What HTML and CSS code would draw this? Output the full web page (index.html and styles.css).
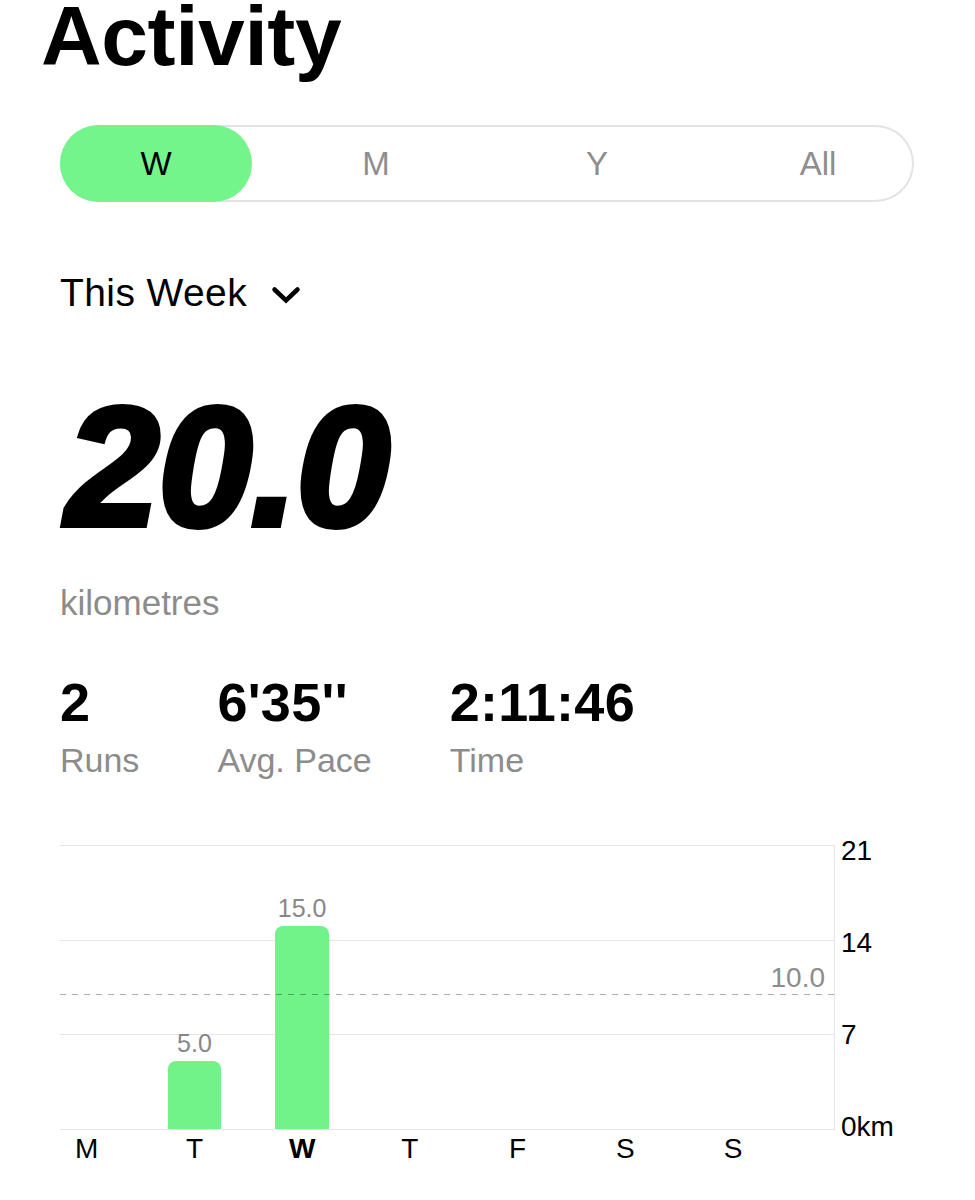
FILE: index.html
```html
<!DOCTYPE html>
<html lang="en">
<head>
<meta charset="utf-8">
<title>Activity</title>
<link rel="stylesheet" href="styles.css">
</head>
<body>
<main class="page">
  <h1 class="title">Activity</h1>

  <div class="seg">
    <div class="seg-pill">W</div>
    <div class="seg-rest">
      <span class="seg-item">M</span>
      <span class="seg-item">Y</span>
      <span class="seg-item">All</span>
    </div>
  </div>

  <div class="period">
    <span>This Week</span>
    <svg class="chev" width="30" height="20" viewBox="0 0 30 20" aria-hidden="true">
      <path d="M3.5 4.5 L15 15.5 L26.5 4.5" fill="none" stroke="#000" stroke-width="4.5" stroke-linecap="round" stroke-linejoin="miter"/>
    </svg>
  </div>

  <div class="big">20.0</div>
  <div class="unit">kilometres</div>

  <div class="stats">
    <div class="stat">
      <div class="stat-value">2</div>
      <div class="stat-label">Runs</div>
    </div>
    <div class="stat">
      <div class="stat-value">6'35''</div>
      <div class="stat-label">Avg. Pace</div>
    </div>
    <div class="stat">
      <div class="stat-value">2:11:46</div>
      <div class="stat-label">Time</div>
    </div>
  </div>

  <div class="chart">
    <div class="chart-main">
      <div class="plot">
        <div class="bars">
          <div class="col"><div class="slot"></div></div>
          <div class="col"><div class="slot"><span class="val">5.0</span><div class="bar" style="height:67.6px"></div></div></div>
          <div class="col"><div class="slot"><span class="val">15.0</span><div class="bar" style="height:202.9px"></div></div></div>
          <div class="col"><div class="slot"></div></div>
          <div class="col"><div class="slot"></div></div>
          <div class="col"><div class="slot"></div></div>
          <div class="col"><div class="slot"></div></div>
        </div>
        <div class="avg"><span class="avg-label">10.0</span></div>
      </div>
      <div class="days">
        <span class="day"><span>M</span></span>
        <span class="day"><span>T</span></span>
        <span class="day cur"><span>W</span></span>
        <span class="day"><span>T</span></span>
        <span class="day"><span>F</span></span>
        <span class="day"><span>S</span></span>
        <span class="day"><span>S</span></span>
      </div>
    </div>
    <div class="axis">
      <span>21</span>
      <span>14</span>
      <span>7</span>
      <span>0km</span>
    </div>
  </div>
</main>
</body>
</html>
```

FILE: styles.css
```css
* { box-sizing: content-box; }

html, body {
  margin: 0;
  padding: 0;
  background: #ffffff;
}

body {
  font-family: "Liberation Sans", Arial, Helvetica, sans-serif;
  color: #000;
}

.page {
  padding: 0 0 0 60px;
}

.title {
  margin: 0 0 0 -19px;
  font-size: 84px;
  line-height: 72px;
  font-weight: 700;
  letter-spacing: -0.4px;
}

/* segmented control */
.seg {
  margin-top: 53px;
  width: 854px;
  height: 77px;
  border-radius: 39px;
  box-shadow: inset 0 0 0 2px #e3e3e3;
  display: flex;
  align-items: center;
}

.seg-pill {
  flex: none;
  width: 192px;
  height: 77px;
  border-radius: 38.5px;
  background: #74f58b;
  display: flex;
  align-items: center;
  justify-content: center;
  font-size: 33px;
  line-height: 33px;
  color: #000;
}

.seg-rest {
  display: flex;
  margin-left: 13.5px;
}

.seg-item {
  flex: none;
  width: 221px;
  text-align: center;
  font-size: 33px;
  line-height: 33px;
  color: #8e8e8e;
}

/* period selector */
.period {
  margin-top: 71px;
  display: flex;
  align-items: flex-start;
  font-size: 39px;
  line-height: 39px;
  letter-spacing: 0.4px;
}

.chev {
  display: block;
  margin-left: 24px;
  margin-top: 12px;
}

/* big number */
.big {
  margin-top: 71px;
  margin-left: 6px;
  font-size: 168px;
  line-height: 168px;
  font-weight: 700;
  font-style: italic;
  -webkit-text-stroke: 6px #000;
  letter-spacing: -1px;
}

.unit {
  margin-top: 34.5px;
  font-size: 35px;
  line-height: 34px;
  color: #8c8c8c;
}

/* stats */
.stats {
  margin-top: 55.5px;
  display: flex;
  gap: 78px;
}

.stat-value {
  font-size: 54px;
  line-height: 54px;
  font-weight: 700;
  letter-spacing: 0.3px;
}

.stat-label {
  margin-top: 13.5px;
  font-size: 34px;
  line-height: 34px;
  color: #8c8c8c;
}

/* chart */
.chart {
  margin-top: 68.5px;
  display: flex;
  align-items: flex-start;
}

.plot {
  position: relative;
  width: 774px;
  height: 285px;
  border-right: 1px solid #e4e4e4;
  background-image: repeating-linear-gradient(to bottom, #e6e6e6 0, #e6e6e6 1px, transparent 1px, transparent 94.667px);
}

.bars {
  display: flex;
  align-items: flex-end;
  height: 284px;
}

.col {
  flex: none;
  width: 107.71px;
}

.slot {
  width: 53.5px;
  display: flex;
  flex-direction: column;
  align-items: center;
}

.val {
  font-size: 25px;
  line-height: 25px;
  color: #878787;
  margin-bottom: 5px;
}

.bar {
  width: 100%;
  background: #72f38a;
  border-radius: 8px 8px 0 0;
}

.avg {
  position: absolute;
  left: 0;
  right: 0;
  top: 148.8px;
  height: 1px;
  background-image: linear-gradient(to right, rgba(0, 0, 0, 0.32) 0, rgba(0, 0, 0, 0.32) 6px, transparent 6px, transparent 12px);
  background-size: 12px 1px;
}

.avg-label {
  position: absolute;
  right: 9px;
  bottom: 3px;
  font-size: 28px;
  line-height: 28px;
  color: #8c8c8c;
}

.days {
  margin-top: 4.5px;
  display: flex;
}

.day {
  flex: none;
  width: 107.71px;
  font-size: 28px;
  line-height: 28px;
}

.day span {
  display: block;
  width: 53.5px;
  text-align: center;
}

.day.cur {
  font-weight: 700;
}

.axis {
  margin-left: 6px;
  margin-top: -8.5px;
  height: 304px;
  display: flex;
  flex-direction: column;
  justify-content: space-between;
  font-size: 28px;
  line-height: 28px;
}
```
